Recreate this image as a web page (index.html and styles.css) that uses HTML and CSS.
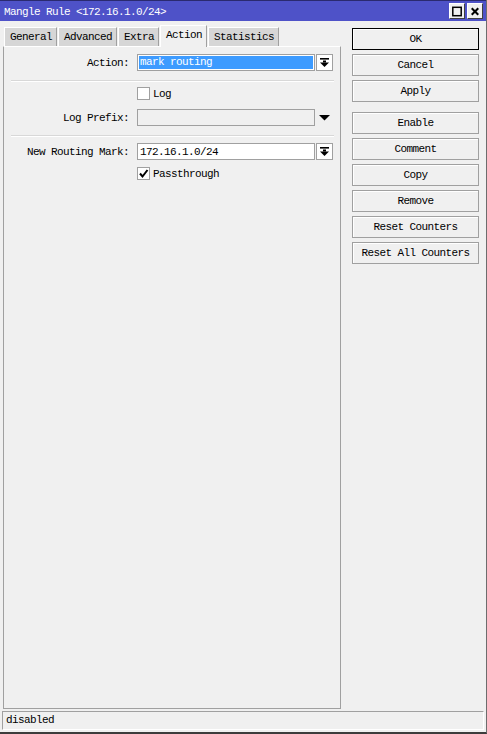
FILE: index.html
```html
<!DOCTYPE html>
<html>
<head>
<meta charset="utf-8">
<link rel="stylesheet" href="styles.css">
</head>
<body>
<div class="window">
  <div class="titlebar">
    <span class="title">Mangle Rule &lt;172.16.1.0/24&gt;</span>
    <div class="tbtns">
      <span class="tbtn"><svg width="15" height="15" viewBox="0 0 15 15"><rect x="3" y="3" width="9" height="9" fill="none" stroke="#000" stroke-width="1.6"/></svg></span>
      <span class="tbtn"><svg width="15" height="15" viewBox="0 0 15 15"><path d="M4 4 L11 11 M11 4 L4 11" stroke="#000" stroke-width="2.2"/></svg></span>
    </div>
  </div>
  <div class="main">
    <div class="left">
      <div class="tabs">
        <div class="tab">General</div>
        <div class="tab">Advanced</div>
        <div class="tab">Extra</div>
        <div class="tab active">Action</div>
        <div class="tab">Statistics</div>
      </div>
      <div class="panel">
        <div class="row">
          <div class="label">Action:</div>
          <div class="input sel"><span class="hl">mark routing</span></div>
          <div class="dd"><svg width="13" height="13" viewBox="0 0 13 13"><rect x="2" y="2" width="9" height="1.6" fill="#000"/><rect x="5" y="4.5" width="3" height="2" fill="#000"/><polygon points="2,6.5 11,6.5 6.5,11" fill="#000"/></svg></div>
        </div>
        <div class="sep"></div>
        <div class="row chkrow">
          <div class="label"></div>
          <span class="chk"></span><span class="chklabel">Log</span>
        </div>
        <div class="row prefix">
          <div class="label">Log Prefix:</div>
          <div class="input dis"></div>
          <div class="ddplain"><svg width="13" height="13" viewBox="0 0 13 13"><polygon points="1,4 12,4 6.5,9.5" fill="#000"/></svg></div>
        </div>
        <div class="sep"></div>
        <div class="row mark">
          <div class="label">New Routing Mark:</div>
          <div class="input">172.16.1.0/24</div>
          <div class="dd"><svg width="13" height="13" viewBox="0 0 13 13"><rect x="2" y="2" width="9" height="1.6" fill="#000"/><rect x="5" y="4.5" width="3" height="2" fill="#000"/><polygon points="2,6.5 11,6.5 6.5,11" fill="#000"/></svg></div>
        </div>
        <div class="row chkrow2">
          <div class="label"></div>
          <span class="chk"><svg width="11" height="11" viewBox="0 0 11 11"><path d="M2 5.5 L4.5 8.5 L9.5 2" fill="none" stroke="#000" stroke-width="2"/></svg></span><span class="chklabel">Passthrough</span>
        </div>
      </div>
    </div>
    <div class="right">
      <div class="btn ok">OK</div>
      <div class="btn">Cancel</div>
      <div class="btn">Apply</div>
      <div class="btn gap">Enable</div>
      <div class="btn">Comment</div>
      <div class="btn">Copy</div>
      <div class="btn">Remove</div>
      <div class="btn">Reset Counters</div>
      <div class="btn">Reset All Counters</div>
    </div>
  </div>
  <div class="status">disabled</div>
</div>
</body>
</html>
```
FILE: styles.css
```css
* { box-sizing: border-box; }
html, body { margin: 0; padding: 0; }
body {
  width: 487px;
  height: 734px;
  overflow: hidden;
  background: #f0f0f0;
  font-family: "Liberation Mono", "DejaVu Sans Mono", monospace;
  font-size: 11px;
  letter-spacing: -0.6px;
  color: #000;
}
.window {
  width: 487px;
  height: 734px;
  display: flex;
  flex-direction: column;
  border-right: 1px solid #6d6d6d;
  border-bottom: 2px solid #3c3c3c;
  background: #f0f0f0;
}
.titlebar {
  height: 21px;
  background: #4e52c8;
  border-top: 1px solid #2a2a70;
  display: flex;
  align-items: center;
  justify-content: space-between;
  padding: 0 3px 0 4px;
  color: #fff;
}
.title { font-size: 11px; padding-top: 1px; }
.tbtns { display: flex; gap: 2px; }
.tbtn {
  width: 16px; height: 16px;
  background: #f0f0f0;
  border: 1px solid #fff;
  border-right-color: #404040;
  border-bottom-color: #404040;
  display: flex; align-items: center; justify-content: center;
}
.main { flex: 1; display: flex; }
.left {
  width: 341px;
  padding: 3px 0 0 3px;
  display: flex;
  flex-direction: column;
}
.tabs { display: flex; height: 22px; align-items: flex-end; padding-left: 1px; }
.tab {
  height: 19px;
  background: #d6d6d6;
  border: 1px solid #fff;
  border-bottom: none;
  border-right: 1px solid #a0a0a0;
  padding: 3px 4px 0 5px;
  margin-right: 1px;
}
.tab.active {
  height: 22px;
  background: #f0f0f0;
  padding: 3px 4px 0 5px;
  position: relative;
  top: 1px;
  z-index: 1;
}
.panel {
  flex: 1;
  border: 1px solid #fff;
  border-right-color: #a0a0a0;
  border-bottom-color: #a0a0a0;
  border-left-color: #a0a0a0;
  padding: 7px 6px 0 7px;
  margin-bottom: 2px;
}
.row { display: flex; align-items: center; height: 17px; }
.label { width: 126px; text-align: right; padding-right: 8px; flex: none; }
.input {
  width: 178px;
  height: 17px;
  background: #fff;
  border: 1px solid #a0a0a0;
  padding: 1px 2px 0 2px;
  line-height: 14px;
}
.input.sel { padding: 1px; }
.hl { display: block; background: #3d9bff; color: #fff; height: 13px; line-height: 13px; padding-left: 1px; }
.input.dis { background: #f0f0f0; }
.dd {
  width: 17px; height: 17px; margin-left: 1px;
  background: #fff;
  border: 1px solid #a0a0a0;
  display: flex; align-items: center; justify-content: center;
}
.ddplain { width: 17px; height: 17px; margin-left: 1px; display: flex; align-items: center; justify-content: center; }
.sep { height: 2px; background: #d8d8d8; border-bottom: 1px solid #fff; margin: 9px 0 0 0; }
.chkrow { height: 13px; margin-top: 5px; }
.prefix { margin-top: 9px; }
.mark { margin-top: 6px; }
.chkrow2 { height: 13px; margin-top: 7px; }
.chk {
  width: 13px; height: 13px;
  background: #fff;
  border: 1px solid #a0a0a0;
  display: flex; align-items: center; justify-content: center;
}
.chklabel { padding-left: 3px; }
.right {
  width: 145px;
  padding: 7px 0 0 11px;
  display: flex;
  flex-direction: column;
  gap: 4px;
}
.btn {
  width: 127px; height: 22px;
  border: 1px solid #a0a0a0;
  box-shadow: inset 1px 1px 0 #fff;
  display: flex; align-items: center; justify-content: center;
  background: #f0f0f0;
}
.btn.ok { border-color: #000; }
.btn.gap { margin-top: 6px; }
.status {
  height: 19px;
  margin: 0 2px 2px 2px;
  border: 1px solid #a0a0a0;
  border-right-color: #fff;
  border-bottom-color: #fff;
  padding: 2px 3px 0 3px;
}
```
